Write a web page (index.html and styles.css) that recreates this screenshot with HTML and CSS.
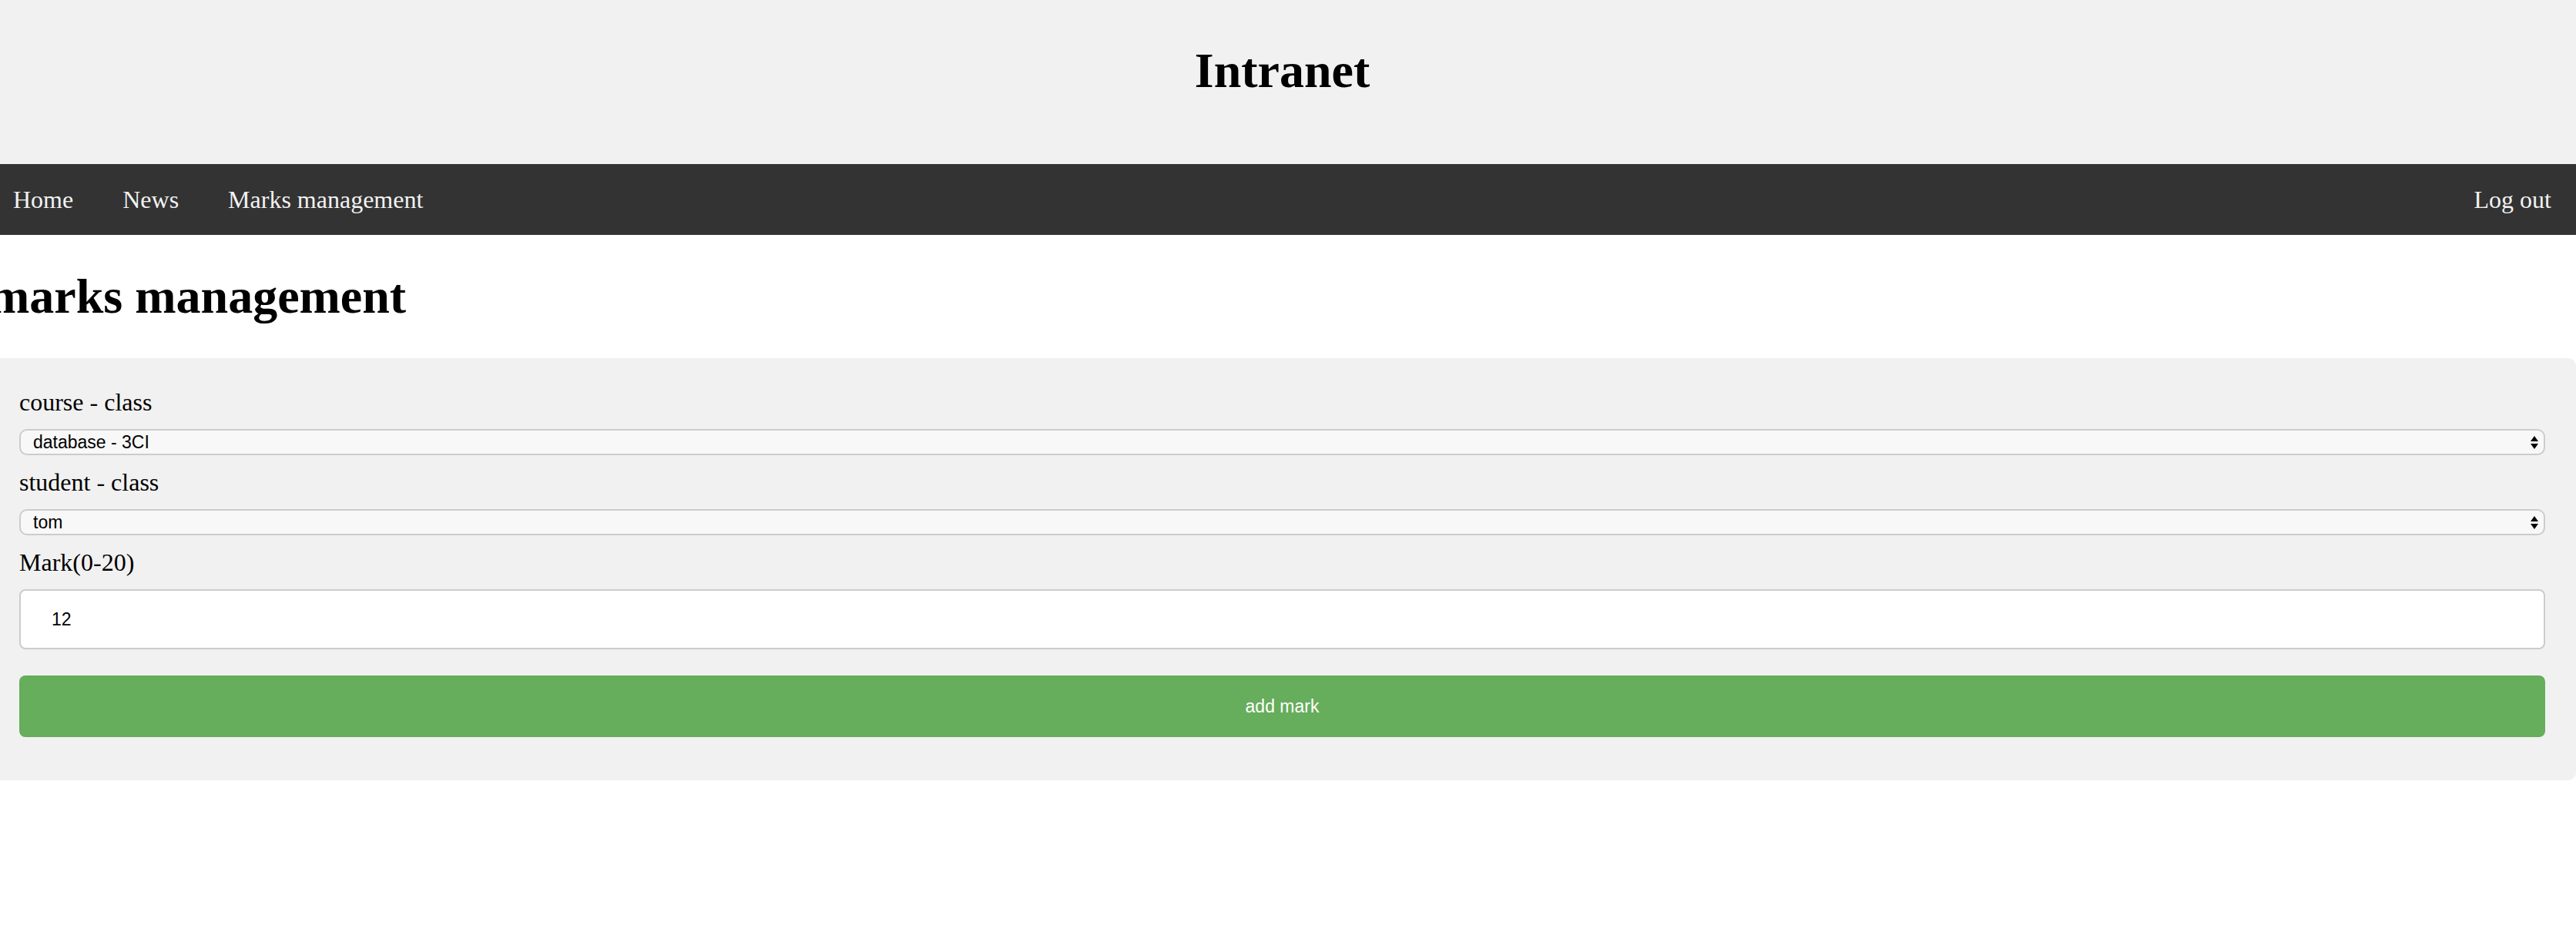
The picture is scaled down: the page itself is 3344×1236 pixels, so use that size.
FILE: index.html
```html
<!DOCTYPE html>
<html lang="en">
<head>
<meta charset="utf-8">
<title>Intranet</title>
<link rel="stylesheet" href="styles.css">
</head>
<body>
<div class="page">
  <header class="site-header">
    <h1 class="site-title">Intranet</h1>
  </header>
  <nav class="topnav">
    <a href="#" class="nav-link">Home</a>
    <a href="#" class="nav-link">News</a>
    <a href="#" class="nav-link">Marks management</a>
    <a href="#" class="nav-link logout">Log out</a>
  </nav>
  <main class="content">
    <h1 class="page-title">marks management</h1>
    <form class="panel">
      <label class="field-label" for="course">course - class</label>
      <div class="select-wrap">
        <select id="course" class="select-field">
          <option>database - 3CI</option>
        </select>
        <svg class="select-arrows" width="10" height="17" viewBox="0 0 10 17"><path d="M0 7 L5 0 L10 7 Z M0 10 L10 10 L5 17 Z" fill="#000"/></svg>
      </div>
      <label class="field-label" for="student">student - class</label>
      <div class="select-wrap">
        <select id="student" class="select-field">
          <option>tom</option>
        </select>
        <svg class="select-arrows" width="10" height="17" viewBox="0 0 10 17"><path d="M0 7 L5 0 L10 7 Z M0 10 L10 10 L5 17 Z" fill="#000"/></svg>
      </div>
      <label class="field-label" for="mark">Mark(0-20)</label>
      <input id="mark" class="text-input" type="text" value="12">
      <input class="submit-btn" type="submit" value="add mark">
    </form>
  </main>
</div>
</body>
</html>
```

FILE: styles.css
```css
body {
  margin: 0;
  background: #ffffff;
  font-family: "Liberation Serif", "Times New Roman", serif;
  color: #000;
}

.page {
  margin-left: -15px;
}

.site-header {
  background: #f1f1f1;
  height: 213px;
  box-sizing: border-box;
  padding-top: 55px;
  text-align: center;
}

.site-title {
  margin: 0;
  font-size: 64px;
  line-height: 74px;
  font-weight: bold;
}

.topnav {
  display: flex;
  background: #333333;
  height: 92px;
}

.nav-link {
  color: #f2f2f2;
  font-size: 32px;
  line-height: 92px;
  padding: 0 32px;
  text-decoration: none;
}

.logout {
  margin-left: auto;
}

.page-title {
  margin: 43px 0;
  font-size: 64px;
  line-height: 74px;
  font-weight: bold;
}

.panel {
  display: flex;
  flex-direction: column;
  background: #f1f1f1;
  border-radius: 10px;
  padding: 38px 40px 40px;
}

.field-label {
  display: block;
  font-size: 32px;
  line-height: 38px;
}

.select-wrap {
  position: relative;
  margin: 16px 0;
}

.select-field {
  display: block;
  width: 100%;
  height: 34px;
  box-sizing: border-box;
  -webkit-appearance: none;
  appearance: none;
  background: #f8f8f8;
  border: 2px solid #cccccc;
  border-radius: 10px;
  padding: 0 16px;
  font-family: "Liberation Sans", Arial, sans-serif;
  font-size: 23px;
  color: #000;
}

.select-arrows {
  position: absolute;
  right: 9px;
  top: 9px;
  pointer-events: none;
}

.text-input {
  display: block;
  width: 100%;
  height: 78px;
  box-sizing: border-box;
  margin: 16px 0;
  padding: 0 40px;
  border: 2px solid #cccccc;
  border-radius: 8px;
  background: #ffffff;
  font-family: "Liberation Sans", Arial, sans-serif;
  font-size: 23px;
  color: #000;
}

.submit-btn {
  display: block;
  width: 100%;
  height: 80px;
  box-sizing: border-box;
  margin: 18px 0 16px;
  border: none;
  border-radius: 8px;
  background: #66ad5c;
  color: #ffffff;
  font-family: "Liberation Sans", Arial, sans-serif;
  font-size: 23px;
  -webkit-appearance: none;
  appearance: none;
}
```
